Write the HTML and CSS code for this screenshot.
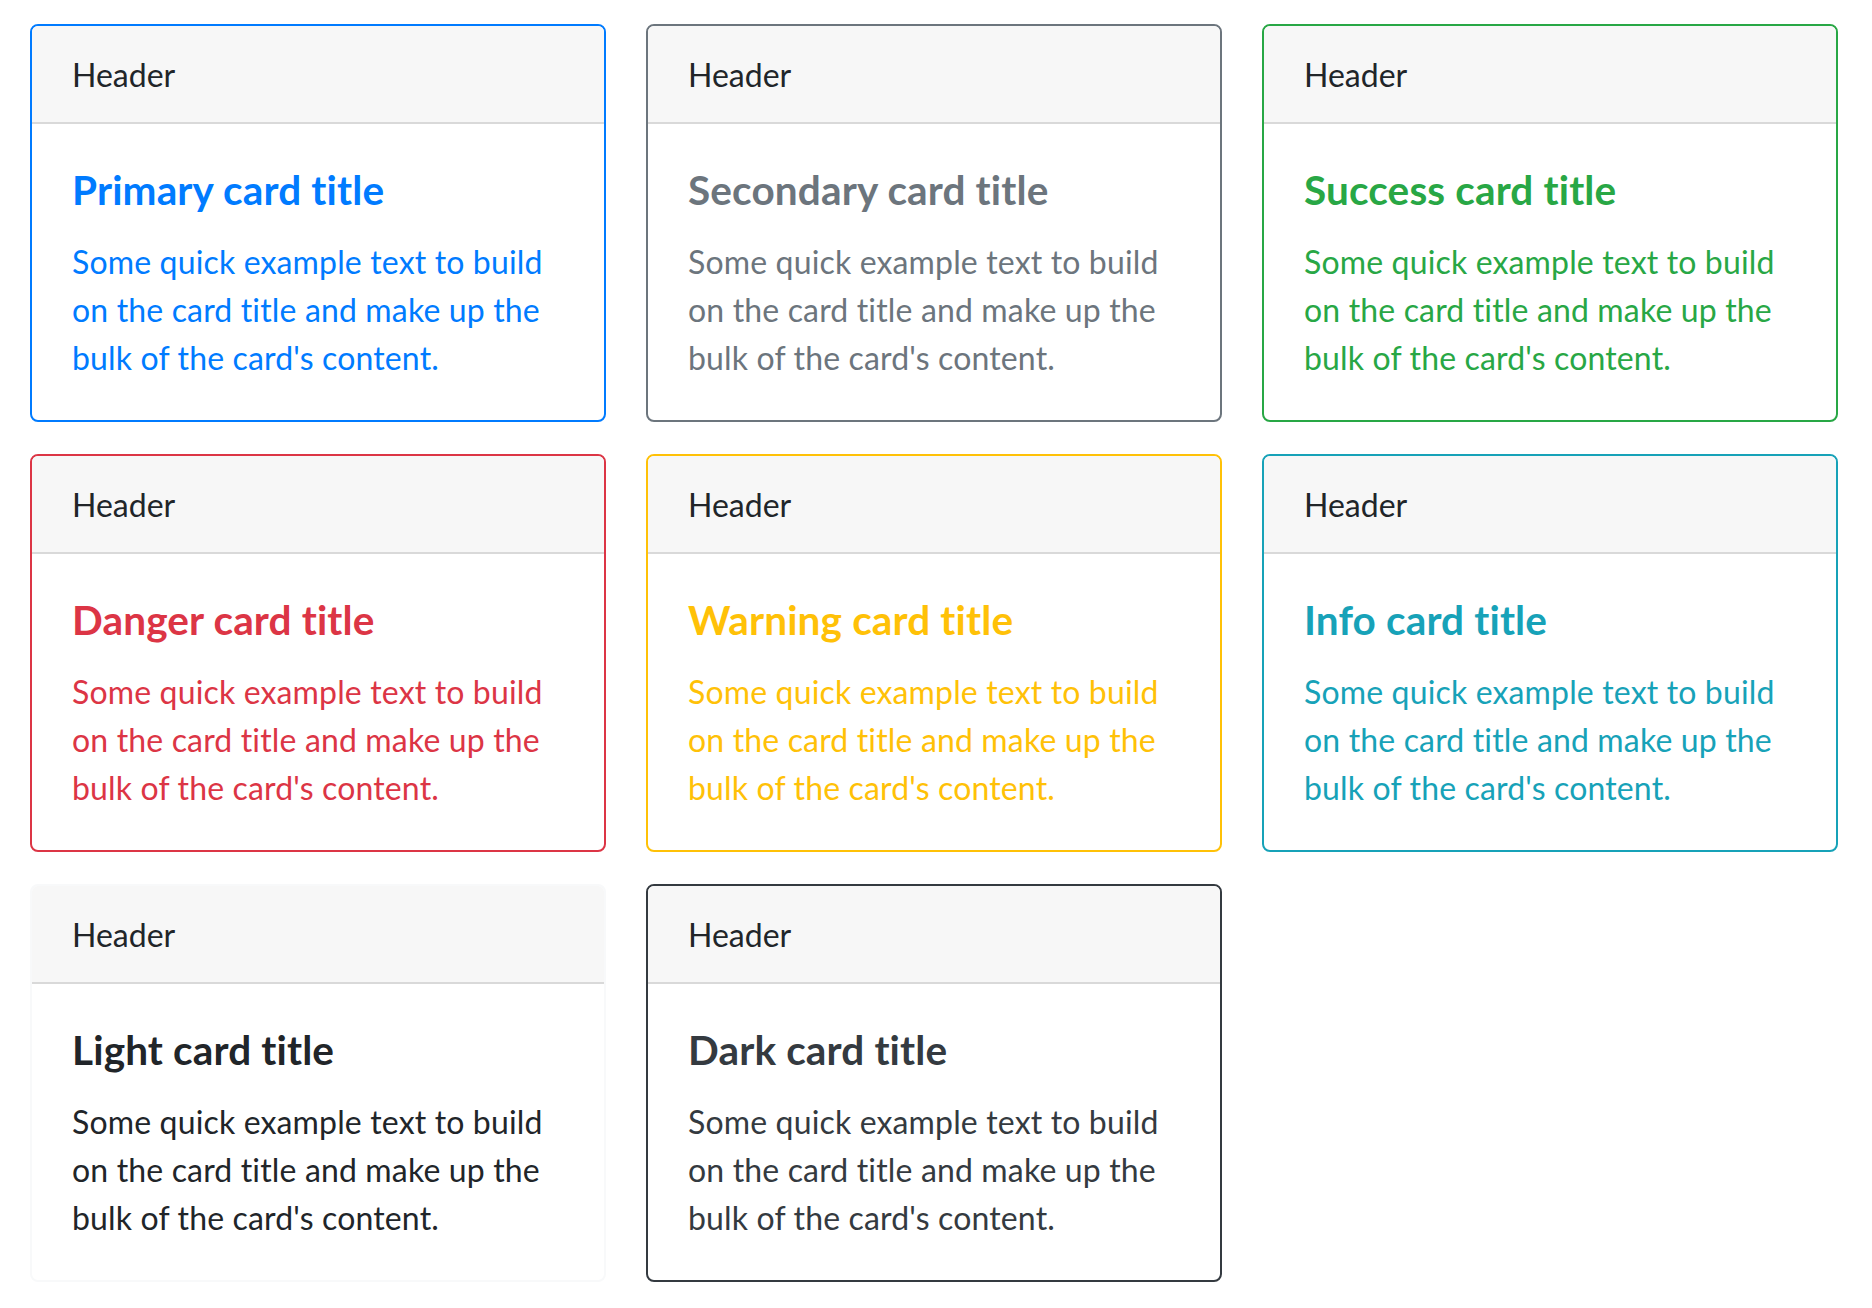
FILE: index.html
```html
<!DOCTYPE html>
<html lang="en">
<head>
<meta charset="utf-8">
<title>Border cards</title>
<link rel="stylesheet" href="styles.css">
</head>
<body>
<div class="grid">
  <div class="card border-primary">
    <div class="card-header">Header</div>
    <div class="card-body text-primary">
      <h5 class="card-title">Primary card title</h5>
      <p class="card-text">Some quick example text to build on the card title and make up the bulk of the card's content.</p>
    </div>
  </div>
  <div class="card border-secondary">
    <div class="card-header">Header</div>
    <div class="card-body text-secondary">
      <h5 class="card-title">Secondary card title</h5>
      <p class="card-text">Some quick example text to build on the card title and make up the bulk of the card's content.</p>
    </div>
  </div>
  <div class="card border-success">
    <div class="card-header">Header</div>
    <div class="card-body text-success">
      <h5 class="card-title">Success card title</h5>
      <p class="card-text">Some quick example text to build on the card title and make up the bulk of the card's content.</p>
    </div>
  </div>
  <div class="card border-danger">
    <div class="card-header">Header</div>
    <div class="card-body text-danger">
      <h5 class="card-title">Danger card title</h5>
      <p class="card-text">Some quick example text to build on the card title and make up the bulk of the card's content.</p>
    </div>
  </div>
  <div class="card border-warning">
    <div class="card-header">Header</div>
    <div class="card-body text-warning">
      <h5 class="card-title">Warning card title</h5>
      <p class="card-text">Some quick example text to build on the card title and make up the bulk of the card's content.</p>
    </div>
  </div>
  <div class="card border-info">
    <div class="card-header">Header</div>
    <div class="card-body text-info">
      <h5 class="card-title">Info card title</h5>
      <p class="card-text">Some quick example text to build on the card title and make up the bulk of the card's content.</p>
    </div>
  </div>
  <div class="card border-light">
    <div class="card-header">Header</div>
    <div class="card-body">
      <h5 class="card-title">Light card title</h5>
      <p class="card-text">Some quick example text to build on the card title and make up the bulk of the card's content.</p>
    </div>
  </div>
  <div class="card border-dark">
    <div class="card-header">Header</div>
    <div class="card-body text-dark">
      <h5 class="card-title">Dark card title</h5>
      <p class="card-text">Some quick example text to build on the card title and make up the bulk of the card's content.</p>
    </div>
  </div>
</div>
</body>
</html>
```
FILE: styles.css
```css
html, body {
  margin: 0;
  padding: 0;
  background: #fff;
}
body {
  font-family: "Lato", "Noto Sans", sans-serif;
  font-size: 32px;
  line-height: 1.5;
  color: #212529;
}
.grid {
  display: grid;
  grid-template-columns: repeat(3, 576px);
  column-gap: 40px;
  row-gap: 32px;
  padding: 24px 0 0 30px;
}
.card {
  box-sizing: border-box;
  height: 398px;
  border: 2px solid rgba(0,0,0,.125);
  border-radius: 8px;
  background: #fff;
  overflow: hidden;
  display: flex;
  flex-direction: column;
}
.card-header {
  padding: 25px 40px 23px;
  height: 48px;
  line-height: 48px;
  background: #f7f7f7;
  border-bottom: 2px solid #d9d9d9;
}
.card-body {
  padding: 43px 40px 36px;
}
.card-title {
  margin: 0 0 25px;
  font-size: 40.5px;
  font-weight: 700;
  line-height: 46px;
  letter-spacing: 0.15px;
}
.card-text {
  margin: 0;
  line-height: 48px;
  letter-spacing: 0.15px;
}
.border-primary { border-color: #007bff; }
.border-secondary { border-color: #6c757d; }
.border-success { border-color: #28a745; }
.border-danger { border-color: #dc3545; }
.border-warning { border-color: #ffc107; }
.border-info { border-color: #17a2b8; }
.border-light { border-color: #f8f9fa; }
.border-dark { border-color: #343a40; }
.text-primary { color: #007bff; }
.text-secondary { color: #6c757d; }
.text-success { color: #28a745; }
.text-danger { color: #dc3545; }
.text-warning { color: #ffc107; }
.text-info { color: #17a2b8; }
.text-dark { color: #343a40; }
```
